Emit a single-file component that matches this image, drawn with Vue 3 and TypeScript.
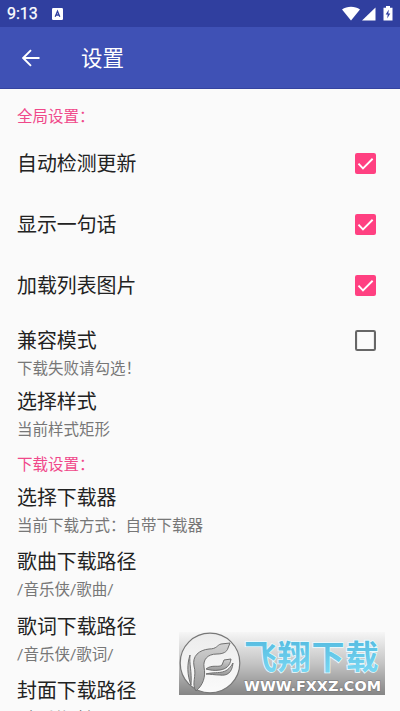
<script setup lang="ts">
import { ref } from 'vue'

interface Toggle {
  title: string
  note?: string
  checked: boolean
}
interface Entry {
  title: string
  note: string
}

const toggles = ref<Toggle[]>([
  { title: '自动检测更新', checked: true },
  { title: '显示一句话', checked: true },
  { title: '加载列表图片', checked: true },
  { title: '兼容模式', note: '下载失败请勾选！', checked: false },
])
const style: Entry = { title: '选择样式', note: '当前样式矩形' }
const downloads: Entry[] = [
  { title: '选择下载器', note: '当前下载方式：自带下载器' },
  { title: '歌曲下载路径', note: '/音乐侠/歌曲/' },
  { title: '歌词下载路径', note: '/音乐侠/歌词/' },
  { title: '封面下载路径', note: '/音乐侠/封面/' },
]
</script>

<template>
  <div class="screen">
    <header class="status">
      <span class="time">9:13</span>
      <svg class="badge-a" viewBox="0 0 11 12">
        <rect width="11" height="12" rx="1.2" fill="#fff" />
        <path d="M3.2 8.8 5.5 3.3 7.8 8.8M4 7h3" fill="none" stroke="#303f9f" stroke-width="1.3" />
      </svg>
      <svg class="signals" viewBox="0 0 52 16">
        <path d="M0 3.6C5-.2 13-.2 18 3.6L9 14.6Z" fill="#fff" />
        <path d="M33.5 1.4v13H20Z" fill="#fff" />
        <path d="M44 0h4v1.8h2.5V14.5h-9V1.8H44Z" fill="#fff" />
        <path d="M46.8 3.5 43.7 8.6h2l-.5 4 3.1-5.2h-2Z" fill="#303f9f" />
      </svg>
    </header>
    <nav class="bar">
      <svg class="back" viewBox="0 0 18 18">
        <path d="M17.5 9H1.5M9 1.2 1.2 9 9 16.8" fill="none" stroke="#fff" stroke-width="1.9" />
      </svg>
      <h1>设置</h1>
    </nav>
    <main class="list">
      <h2 class="first">全局设置：</h2>
      <div
        v-for="item in toggles"
        :key="item.title"
        class="row toggle"
        :class="{ noted: item.note }"
        @click="item.checked = !item.checked"
      >
        <div class="label">
          <p class="title">{{ item.title }}</p>
          <p v-if="item.note" class="note">{{ item.note }}</p>
        </div>
        <svg class="check" viewBox="0 0 20 20">
          <template v-if="item.checked">
            <rect width="20" height="20" rx="2" fill="#ff4081" />
            <path d="m3.3 10.2 4.3 4.4 9.2-9.1" fill="none" stroke="#fff" stroke-width="1.8" />
          </template>
          <rect v-else x="1" y="1" width="18" height="18" rx="1.2" fill="none" stroke="#666" stroke-width="2" />
        </svg>
      </div>
      <div class="row style-row">
        <p class="title">{{ style.title }}</p>
        <p class="note">{{ style.note }}</p>
      </div>
      <h2 class="second">下载设置：</h2>
      <div v-for="item in downloads" :key="item.title" class="row entry">
        <p class="title">{{ item.title }}</p>
        <p class="note">{{ item.note }}</p>
      </div>
    </main>
    <aside class="mark">
      <svg viewBox="0 0 206 63">
        <defs>
          <linearGradient id="plate" x2="0" y2="1">
            <stop offset="0" stop-color="#f6f6f6" />
            <stop offset=".5" stop-color="#c4c4c4" />
            <stop offset="1" stop-color="#858585" />
          </linearGradient>
          <linearGradient id="disc" x2="0" y2="1">
            <stop offset="0" stop-color="#ececec" />
            <stop offset="1" stop-color="#fafafa" />
          </linearGradient>
          <linearGradient id="wing" x2="0" y2="1">
            <stop offset="0" stop-color="#d2d2d2" />
            <stop offset="1" stop-color="#999" />
          </linearGradient>
          <linearGradient id="sky" x2="0" y2="1">
            <stop offset="0" stop-color="#4cb5dc" />
            <stop offset="1" stop-color="#80dcf6" />
          </linearGradient>
        </defs>
        <rect width="206" height="63" fill="url(#plate)" />
        <circle cx="31" cy="31" r="29.8" fill="url(#disc)" stroke="#777" stroke-width="1.2" />
        <g fill="url(#wing)" stroke="#707070" stroke-width="1">
          <path d="M51 11 49 16C48 20 44 22 38 22C28 22 24 28 25 35C27 45 24 53 17 59C12 52 18 44 15 34C13 24 20 18 30 17C38 17 38 13 42 12Z" />
          <path d="M11 23C10 32 13 39 12 53C8 43 8 32 11 23Z" />
          <path d="M27 37C33 32 40 36 43 33L45 28 52 27C51 34 47 37 41 38C35 39 31 38 27 37Z" />
          <path d="M27 42C38 39 47 44 54 31C53 41 48 44 41 43C36 43 31 42 27 42Z" />
        </g>
        <text class="brand" x="65 98.5 132.5 166.5" y="37">飞翔下载</text>
        <text class="site" x="65" y="58.5" textLength="137" lengthAdjust="spacingAndGlyphs">WWW.FXXZ.COM</text>
      </svg>
    </aside>
  </div>
</template>

<style>
body {
  overflow: hidden;
}
</style>

<style scoped>
.screen {
  position: relative;
  height: 711px;
  overflow: hidden;
  background: #fafafa;
  font-family: Roboto, "Noto Sans CJK SC", sans-serif;
  color: #222;
}
.status {
  display: flex;
  align-items: center;
  height: 27px;
  padding: 0 7px;
  box-sizing: border-box;
  background: #303f9f;
  color: #fff;
}
.time {
  width: 45px;
  font-size: 16px;
  font-weight: 400;
  line-height: 27px;
  -webkit-text-stroke: 0.25px #fff;
}
.badge-a {
  width: 11px;
  height: 12px;
}
.signals {
  width: 52px;
  height: 16px;
  margin-left: auto;
  margin-right: -1px;
}
.bar {
  display: flex;
  align-items: center;
  height: 62px;
  padding-left: 22px;
  box-sizing: border-box;
  background: #3f51b5;
  border-bottom: 1px solid #3443a0;
  color: #fff;
}
.back {
  width: 18px;
  height: 18px;
}
h1 {
  margin: 0 0 0 41px;
  padding-top: 2px;
  font-size: 21.5px;
  font-weight: 400;
  line-height: 32px;
}
.list {
  padding: 0 24px 0 17px;
}
h2 {
  margin: 0;
  font-size: 15.5px;
  font-weight: 400;
  line-height: 22px;
  color: #f0488a;
}
.first {
  padding: 17px 0 5px;
}
.second {
  padding: 10px 0 9px;
}
p {
  margin: 0;
  white-space: nowrap;
}
.title {
  font-size: 19.9px;
  line-height: 28px;
}
.note {
  font-size: 15.5px;
  line-height: 27px;
  color: #777;
}
.toggle {
  display: flex;
  align-items: center;
  justify-content: space-between;
  height: 61px;
}
.label {
  padding-top: 3px;
}
.noted {
  height: 73px;
  align-items: flex-start;
  padding-top: 10px;
  box-sizing: border-box;
}
.noted .label {
  padding-top: 2px;
}
.noted .check {
  margin-top: 3.5px;
}
.check {
  width: 21px;
  height: 21px;
}
.style-row {
  margin-bottom: -1px;
}
.style-row .note {
  line-height: 26px;
  padding-bottom: 2px;
}
.entry {
  height: 64.4px;
}
.mark {
  position: absolute;
  left: 179px;
  top: 632px;
  width: 206px;
  height: 63px;
}
.mark svg {
  display: block;
  width: 206px;
  height: 63px;
}
.brand {
  font: 700 33px "Noto Sans CJK SC", sans-serif;
  fill: url(#sky);
  stroke: #e9fbff;
  stroke-width: 1.6px;
  paint-order: stroke;
}
.site {
  font: 700 13.5px "DejaVu Sans", sans-serif;
  fill: #fff;
  stroke: #777;
  stroke-width: 1px;
  paint-order: stroke;
}
</style>
